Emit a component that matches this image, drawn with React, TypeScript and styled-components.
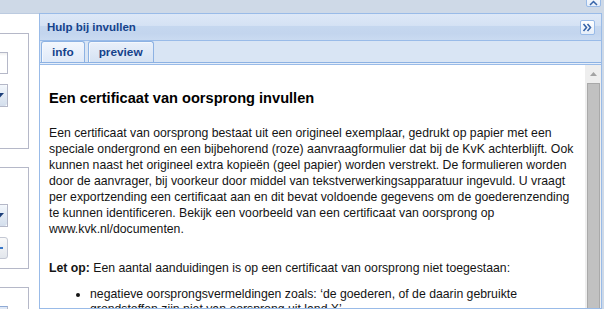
import React from "react";
import styled, { createGlobalStyle } from "styled-components";

const GlobalStyle = createGlobalStyle`
  html, body { margin: 0; padding: 0; overflow: hidden; background: #ffffff; }
  body { font-family: "Liberation Sans", Arial, sans-serif; }
  * { box-sizing: border-box; }
`;

const Viewport = styled.div`
  width: 604px;
  height: 309px;
  overflow: hidden;
  display: flex;
  flex-direction: column;
  background: #ced9e7;
`;

const TopStrip = styled.div`
  height: 13px;
  flex: none;
  display: flex;
  justify-content: flex-end;
  align-items: flex-start;
  padding-right: 3px;
`;

const ToolButton = styled.div<{ $shift?: number }>`
  width: 15px;
  height: 15px;
  flex: none;
  margin-top: ${(p) => p.$shift ?? 0}px;
  border: 1px solid #99bbe8;
  border-radius: 2px;
  background: linear-gradient(#ffffff, #e6eef9);
  display: flex;
  align-items: center;
  justify-content: center;
  svg { display: block; }
`;

const Main = styled.div`
  flex: 1;
  min-height: 0;
  display: flex;
`;

const WestPanel = styled.div`
  width: 39px;
  flex: none;
  background: #ffffff;
  border-top: 1px solid #bccbe0;
  overflow: hidden;
  display: flex;
  flex-direction: column;
  align-items: flex-end;
  gap: 18px;
  padding: 19px 10px 0 0;
`;

const FieldBox = styled.div<{ $h?: number; $pt: number }>`
  width: 200px;
  flex: none;
  height: ${(p) => (p.$h ? `${p.$h}px` : "auto")};
  border: 1px solid #b5b8c8;
  display: flex;
  flex-direction: column;
  align-items: flex-end;
  gap: 10px;
  padding: ${(p) => p.$pt}px 20px 0 0;
  overflow: hidden;
`;

const TextInput = styled.div<{ $tint?: boolean }>`
  width: 120px;
  height: 22px;
  flex: none;
  border: 1px solid #b5b8c8;
  border-top-color: ${(p) => (p.$tint ? "#8eaad6" : "#b5b8c8")};
  background: ${(p) => (p.$tint ? "#dfe8f6" : "linear-gradient(#eeeeee 0, #ffffff 3px)")};
`;

const Combo = styled.div`
  width: 120px;
  height: 23px;
  flex: none;
  display: flex;
  border: 1px solid #b5b8c8;
  background: #ffffff;
`;

const ComboText = styled.div`
  flex: 1;
`;

const Trigger = styled.div`
  width: 17px;
  flex: none;
  background: linear-gradient(#f3f7fc, #d3deec);
  border-left: 1px solid #b5b8c8;
  border-radius: 0 3px 3px 0;
  display: flex;
  align-items: center;
  justify-content: center;
`;

const SmallButton = styled.div`
  width: 60px;
  height: 22px;
  flex: none;
  border: 1px solid #c3c7d3;
  border-radius: 3px;
  background: linear-gradient(#fafafa, #e2e6ec);
  display: flex;
  align-items: center;
  justify-content: flex-end;
  padding-right: 4px;
`;

const Panel = styled.section`
  flex: 1;
  min-width: 0;
  margin-right: 2px;
  border: 1px solid #99bbe8;
  display: flex;
  flex-direction: column;
  background: #ffffff;
`;

const PanelHeader = styled.header`
  height: 27px;
  flex: none;
  display: flex;
  align-items: center;
  justify-content: space-between;
  padding: 0 6px 0 7px;
  border-bottom: 1px solid #99bbe8;
  background: linear-gradient(
    to bottom,
    #dde8f7 0%,
    #d5e2f4 44%,
    #c5d7ef 48%,
    #c3d5ee 75%,
    #cadbf1 100%
  );
`;

const Title = styled.h2`
  margin: 0;
  font-family: "Liberation Sans", Arial, sans-serif;
  font-size: 11.5px;
  font-weight: bold;
  color: #15428b;
  line-height: 14px;
`;

const TabHeader = styled.div`
  flex: none;
  background: #e6eef9;
  border-bottom: 1px solid #99bbe8;
  padding-bottom: 1px;
`;

const TabStrip = styled.div`
  height: 22px;
  display: flex;
  align-items: flex-end;
  gap: 3px;
  padding-left: 1px;
  background: #d9e5f4;
  border-bottom: 1px solid #8db2e3;
`;

const Tab = styled.div<{ $active?: boolean }>`
  height: 21px;
  padding: 0 10px;
  display: flex;
  align-items: center;
  border: 1px solid #8db2e3;
  border-bottom: none;
  border-radius: 3px 3px 0 0;
  box-shadow: inset 1px 1px 0 #f4f8fd;
  background: ${(p) =>
    p.$active
      ? "linear-gradient(#f3f7fd, #dfe9f8)"
      : "linear-gradient(#e9f0fa, #d5e2f3)"};
  font-size: 11.8px;
  font-weight: bold;
  color: #15428b;
`;

const Body = styled.div`
  flex: 1;
  min-height: 0;
  display: flex;
  overflow: hidden;
`;

const Article = styled.article`
  flex: 1;
  min-width: 0;
  overflow: hidden;
  padding: 25px 0 0 9px;
  color: #141414;
  font-size: 12.25px;
  line-height: 16px;
  white-space: nowrap;
`;

const Heading = styled.h1`
  margin: 0;
  font-size: 14.6px;
  line-height: 17px;
  font-weight: bold;
  color: #000000;
`;

const Para = styled.p<{ $mt: number }>`
  margin: ${(p) => p.$mt}px 0 0;
`;

const Bullets = styled.ul`
  margin: 11px 0 0;
  padding-left: 41px;
  list-style: disc;
  line-height: 15px;
`;

const Scrollbar = styled.div`
  width: 16px;
  flex: none;
  display: flex;
  flex-direction: column;
  background: #eeeeee;
`;

const ScrollArrow = styled.div`
  height: 18px;
  flex: none;
  display: flex;
  align-items: center;
  justify-content: center;
  svg { display: block; }
`;

const ScrollThumb = styled.div`
  flex: 1;
  margin: 0 1px 0 2px;
  background: #c1c1c1;
  border: 1px solid #a9a9a9;
  border-bottom: none;
`;

const DoubleChevron = () => (
  <svg width="11" height="9" viewBox="0 0 11 9">
    <path d="M1.5 1 L4.5 4.5 L1.5 8 M5.5 1 L8.5 4.5 L5.5 8" fill="none" stroke="#3764a8" strokeWidth="1.6" />
  </svg>
);

const ChevronUp = () => (
  <svg width="11" height="13" viewBox="0 0 11 13">
    <path d="M2 12 L5.5 8.5 L9 12" fill="none" stroke="#3764a8" strokeWidth="1.5" />
  </svg>
);

const ComboArrow = () => (
  <svg width="9" height="5" viewBox="0 0 9 5">
    <path d="M0 0 H9 L4.5 5 Z" fill="#1d3f7a" />
  </svg>
);

const PlusIcon = () => (
  <svg width="8" height="8" viewBox="0 0 8 8">
    <path d="M4 0 V8 M0 4 H8" stroke="#3a78c8" strokeWidth="2" />
  </svg>
);

const ScrollUpIcon = () => (
  <svg width="7" height="4" viewBox="0 0 7 4">
    <path d="M0 4 L3.5 0 L7 4 Z" fill="#a3a3a3" />
  </svg>
);

export default function App() {
  return (
    <>
      <GlobalStyle />
      <Viewport>
        <TopStrip>
          <ToolButton $shift={-8}>
            <ChevronUp />
          </ToolButton>
        </TopStrip>
        <Main>
          <WestPanel>
            <FieldBox $h={116} $pt={18}>
              <TextInput />
              <Combo>
                <ComboText />
                <Trigger>
                  <ComboArrow />
                </Trigger>
              </Combo>
            </FieldBox>
            <FieldBox $h={102} $pt={36}>
              <Combo>
                <ComboText />
                <Trigger>
                  <ComboArrow />
                </Trigger>
              </Combo>
              <SmallButton>
                <PlusIcon />
              </SmallButton>
            </FieldBox>
            <FieldBox $pt={18}>
              <TextInput $tint />
            </FieldBox>
          </WestPanel>
          <Panel>
            <PanelHeader>
              <Title>Hulp bij invullen</Title>
              <ToolButton>
                <DoubleChevron />
              </ToolButton>
            </PanelHeader>
            <TabHeader>
              <TabStrip>
                <Tab $active>info</Tab>
                <Tab>preview</Tab>
              </TabStrip>
            </TabHeader>
            <Body>
              <Article>
                <Heading>Een certificaat van oorsprong invullen</Heading>
                <Para $mt={18}>
                  Een certificaat van oorsprong bestaat uit een origineel exemplaar, gedrukt op papier met een
                  <br />
                  speciale ondergrond en een bijbehorend (roze) aanvraagformulier dat bij de KvK achterblijft. Ook
                  <br />
                  kunnen naast het origineel extra kopieën (geel papier) worden verstrekt. De formulieren worden
                  <br />
                  door de aanvrager, bij voorkeur door middel van tekstverwerkingsapparatuur ingevuld. U vraagt
                  <br />
                  per exportzending een certificaat aan en dit bevat voldoende gegevens om de goederenzending
                  <br />
                  te kunnen identificeren. Bekijk een voorbeeld van een certificaat van oorsprong op
                  <br />
                  www.kvk.nl/documenten.
                </Para>
                <Para $mt={23}>
                  <strong>Let op:</strong> Een aantal aanduidingen is op een certificaat van oorsprong niet toegestaan:
                </Para>
                <Bullets>
                  <li>
                    negatieve oorsprongsvermeldingen zoals: ‘de goederen, of de daarin gebruikte
                    <br />
                    grondstoffen zijn niet van oorsprong uit land X’
                  </li>
                </Bullets>
              </Article>
              <Scrollbar>
                <ScrollArrow>
                  <ScrollUpIcon />
                </ScrollArrow>
                <ScrollThumb />
              </Scrollbar>
            </Body>
          </Panel>
        </Main>
      </Viewport>
    </>
  );
}
